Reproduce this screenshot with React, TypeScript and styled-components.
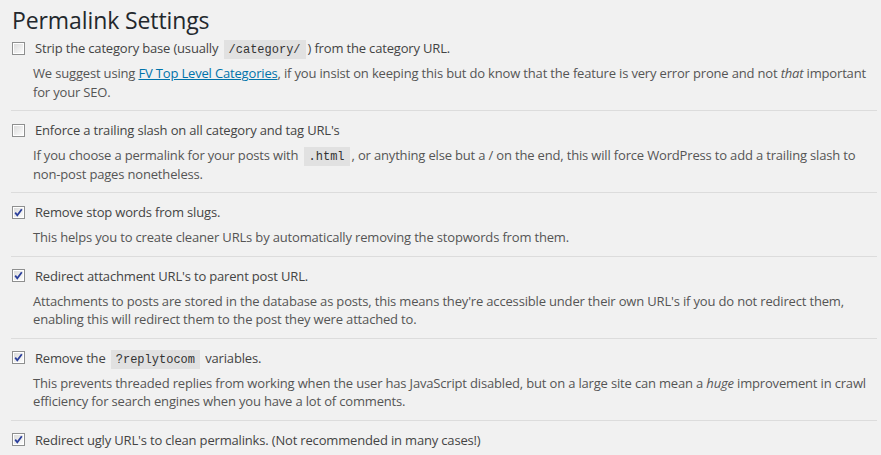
import styled, { createGlobalStyle } from "styled-components"
import { ReactNode } from "react"

const GlobalStyle = createGlobalStyle`
  html, body {
    margin: 0;
    background: #f1f1f1;
  }
  body {
    font-family: "Open Sans", "Liberation Sans", sans-serif;
    font-size: 13px;
    letter-spacing: -0.17px;
    color: #444;
  }
`

const Wrap = styled.div`
  width: 866px;
  margin-left: 11px;
`

const Title = styled.h1`
  margin: 0;
  padding: 6px 0 0 1px;
  font-size: 23px;
  line-height: 29px;
  font-weight: 400;
  letter-spacing: -0.1px;
  color: #23282d;
`

const List = styled.div`
  display: flex;
  flex-direction: column;
`

const Row = styled.div`
  padding: 9px 0 9px;
  border-top: 1px solid #dcdcdc;
  &:first-child {
    padding-top: 3px;
    border-top: none;
  }
`

const Label = styled.label`
  display: flex;
  align-items: center;
  gap: 10px;
  line-height: 20px;
  padding-left: 1px;
  color: #444;
`

const Desc = styled.p`
  margin: 6px 0 0;
  padding-left: 22px;
  line-height: 18.5px;
  color: #555;
`

const Code = styled.code`
  font-family: "Liberation Mono", "DejaVu Sans Mono", monospace;
  font-size: 12px;
  line-height: 1;
  letter-spacing: 0;
  background: #e1e1e1;
  color: #333;
  padding: 3px 5px 2px;
  margin: 0 2px;
`

const Em = styled.em`
  line-height: 1;
`

const Link = styled.a`
  color: #0073aa;
  text-decoration: underline;
  line-height: 1;
`

const Box = ({ checked }: { checked?: boolean }) => (
  <svg width="13" height="13" viewBox="0 0 13 13" style={{ flex: "none" }}>
    <defs>
      <linearGradient id="cbg" x1="0" y1="0" x2="1" y2="1">
        <stop offset="0" stopColor="#dcdcdc" />
        <stop offset="1" stopColor="#fbfbfb" />
      </linearGradient>
    </defs>
    <rect x="0.5" y="0.5" width="12" height="12" fill="#fff" stroke="#8e8f8f" />
    <rect x="2" y="2" width="9" height="9" fill="url(#cbg)" />
    {checked && (
      <path d="M3.2 6.6 L5.3 9.2 L9.8 3.2" fill="none" stroke="#2b3f9c" strokeWidth="1.8" />
    )}
  </svg>
)

type SettingProps = {
  checked?: boolean
  label: ReactNode
  children?: ReactNode
}

const Setting = ({ checked, label, children }: SettingProps) => (
  <Row>
    <Label>
      <Box checked={checked} />
      <span>{label}</span>
    </Label>
    {children && <Desc>{children}</Desc>}
  </Row>
)

export default function App() {
  return (
    <Wrap>
      <GlobalStyle />
      <Title>Permalink Settings</Title>
      <List>
        <Setting
          label={
            <>
              Strip the category base (usually <Code>/category/</Code>) from the category URL.
            </>
          }
        >
          We suggest using <Link href="#">FV Top Level Categories</Link>, if you insist on keeping this but do
          know that the feature is very error prone and not <Em>that</Em> important for your SEO.
        </Setting>
        <Setting label="Enforce a trailing slash on all category and tag URL's">
          If you choose a permalink for your posts with <Code>.html</Code>, or anything else but a / on the end,
          this will force WordPress to add a trailing slash to non-post pages nonetheless.
        </Setting>
        <Setting checked label="Remove stop words from slugs.">
          This helps you to create cleaner URLs by automatically removing the stopwords from them.
        </Setting>
        <Setting checked label="Redirect attachment URL's to parent post URL.">
          Attachments to posts are stored in the database as posts, this means they're accessible under their own
          URL's if you do not redirect them, enabling this will redirect them to the post they were attached to.
        </Setting>
        <Setting
          checked
          label={
            <>
              Remove the <Code>?replytocom</Code> variables.
            </>
          }
        >
          This prevents threaded replies from working when the user has JavaScript disabled, but on a large site can
          mean a <Em>huge</Em> improvement in crawl efficiency for search engines when you have a lot of comments.
        </Setting>
        <Setting checked label="Redirect ugly URL's to clean permalinks. (Not recommended in many cases!)" />
      </List>
    </Wrap>
  )
}
